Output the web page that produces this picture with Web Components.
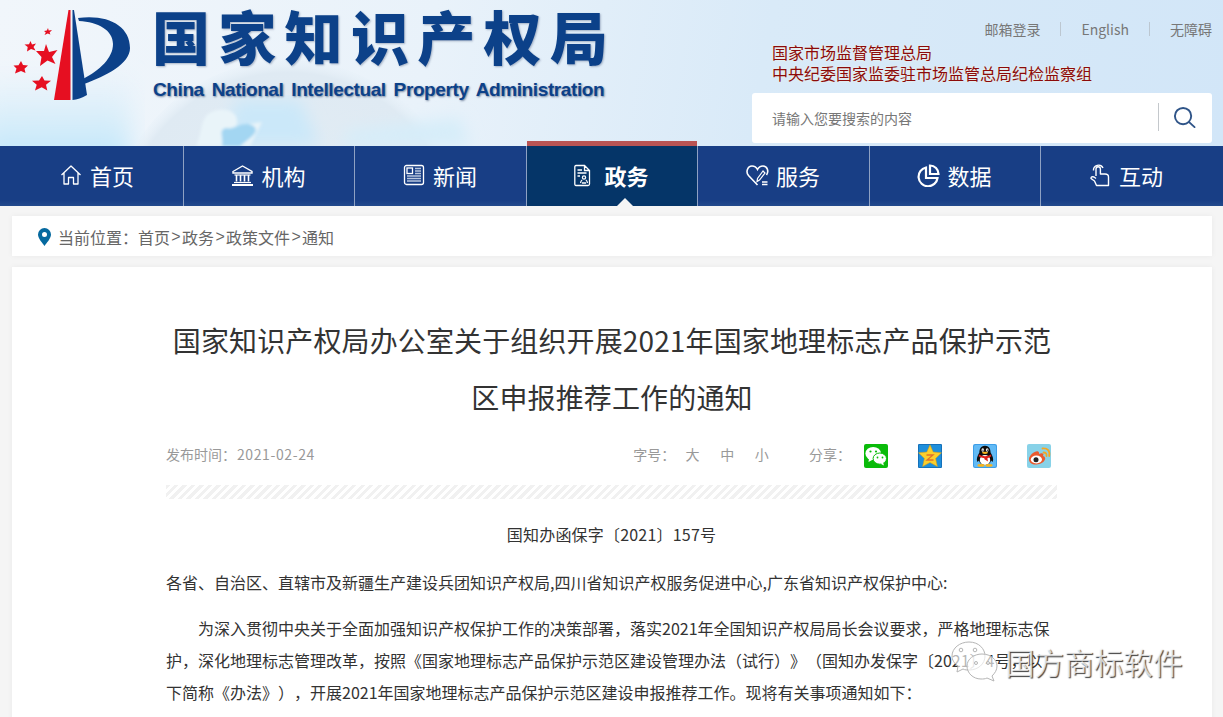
<!DOCTYPE html>
<html lang="zh">
<head>
<meta charset="utf-8">
<title>国家知识产权局</title>
<style>
  html, body { margin: 0; padding: 0; height: 717px; overflow: hidden; }
  body { background: #f5f5f5; font-family: "Noto Sans CJK SC", "Liberation Sans", sans-serif; color: #333; }
  site-nav { margin-bottom: 10px; }
  bread-crumb { margin-bottom: 11px; }
</style>
</head>
<body>
<site-header></site-header>
<site-nav>
  <nav-item icon="home">首页</nav-item>
  <nav-item icon="bank">机构</nav-item>
  <nav-item icon="news">新闻</nav-item>
  <nav-item icon="doc" active>政务</nav-item>
  <nav-item icon="heart">服务</nav-item>
  <nav-item icon="pie">数据</nav-item>
  <nav-item icon="hand">互动</nav-item>
</site-nav>
<bread-crumb>
  <span>当前位置：</span><a>首页</a><i>&gt;</i><a>政务</a><i>&gt;</i><a>政策文件</a><i>&gt;</i><a>通知</a>
</bread-crumb>
<article-card>
  <span slot="title">国家知识产权局办公室关于组织开展2021年国家地理标志产品保护示范区申报推荐工作的通知</span>
  <article-meta slot="meta" date="2021-02-24"></article-meta>
  <p class="center">国知办函保字〔2021〕157号</p>
  <p class="addr">各省、自治区、直辖市及新疆生产建设兵团知识产权局,四川省知识产权服务促进中心,广东省知识产权保护中心:</p>
  <p class="indent">为深入贯彻中央关于全面加强知识产权保护工作的决策部署，落实2021年全国知识产权局局长会议要求，严格地理标志保护，深化地理标志管理改革，按照《国家地理标志产品保护示范区建设管理办法（试行）》（国知办发保字〔2021〕4号，以下简称《办法》），开展2021年国家地理标志产品保护示范区建设申报推荐工作。现将有关事项通知如下：</p>
</article-card>
<water-mark>国方商标软件</water-mark>

<script>
// cabecera con fondo, logo, enlaces y buscador
class SiteHeader extends HTMLElement {
  constructor() {
    super();
    this.attachShadow({ mode: "open" });
  }
  connectedCallback() {
    this.shadowRoot.innerHTML = `
      <style>
        :host { display: block; position: relative; height: 146px; overflow: hidden;
          background: linear-gradient(100deg, #f1f6fb 0%, #e9f2fa 35%, #d9eaf8 62%, #d2e6f8 100%); }
        .bg { position: absolute; left: 0; top: 0; width: 1223px; height: 146px; }
        .wrap { position: relative; width: 1200px; height: 146px; margin-left: 12px;
          display: flex; justify-content: space-between; }
        .brand { display: flex; }
        .logo { width: 140px; height: 110px; margin-left: -12px; flex: none; }
        .names { margin-left: 12px; }
        .cn { font: 900 58px/58px "Noto Sans CJK SC", sans-serif; letter-spacing: 8.3px; color: #0c4189;
          margin-top: 6px; text-shadow: 1px 1px 2px rgba(40,60,100,.35); white-space: nowrap; }
        .en { font: bold 19px/24px "Liberation Sans", sans-serif; color: #0c4189; margin-top: 14px; margin-left: 1px;
          word-spacing: 3px; letter-spacing: -.4px; text-shadow: 1px 1px 2px rgba(30,50,90,.55); white-space: nowrap; }
        .side { width: 460px; display: flex; flex-direction: column; }
      </style>
      <svg class="bg" viewBox="0 0 1223 146">
        <defs>
          <radialGradient id="gl" cx=".5" cy=".5" r=".5">
            <stop offset="0" stop-color="#e4eef5"/>
            <stop offset=".93" stop-color="#dfeaf3"/>
            <stop offset="1" stop-color="#e6f0f8" stop-opacity=".3"/>
          </radialGradient>
          <linearGradient id="lf" x1="0" y1="0" x2="0" y2="1">
            <stop offset="0" stop-color="#c8e9fa" stop-opacity="0"/>
            <stop offset="1" stop-color="#b9e4fa"/>
          </linearGradient>
          <filter id="bl"><feGaussianBlur stdDeviation="1.5"/></filter>
          <filter id="bl1"><feGaussianBlur stdDeviation="8"/></filter>
          <filter id="bl2"><feGaussianBlur stdDeviation="12"/></filter>
        </defs>
        <rect x="-20" y="70" width="150" height="100" fill="url(#lf)" filter="url(#bl2)"/>
        <circle cx="288" cy="240" r="180" fill="url(#gl)"/>
        <g filter="url(#bl1)">
          <path d="M235 100 H300 L320 146 H225Z" fill="#cbe8f9"/>
          <path d="M350 130 L460 118 L470 146 H340Z" fill="#d6edf9"/>
        </g>
        <g filter="url(#bl)">
          <path d="M196 146 C205 128 198 114 218 110 C232 108 240 116 236 126 L262 122 L250 146Z" fill="#e9f4f9"/>
          <path d="M222 146 C224 136 218 130 226 128 C234 130 236 124 248 124 C258 126 258 132 250 138 L240 146Z" fill="#a3d6f2"/>
        </g>
      </svg>
      <div class="wrap">
        <div class="brand">
          <svg class="logo" viewBox="0 0 140 110">
            <g fill="#e60f21">
              <path d="M68.5 10 L70.5 10 L70.5 100 L54 100Z"/>
              <path d="M46 44 L49 52 L57.5 50 L52 57 L55.5 64 L47.5 60.5 L40 66 L41.5 57 L36 51 L44 51Z"/>
              <path d="M30.5 41 L32 44.5 L36 43.5 L33.5 47 L35.5 50.5 L31 49 L27 51.5 L27.7 47 L24.5 44.5 L29 44.3Z"/>
              <path d="M48 28 L48.7 30.5 L52 30 L49.6 32.4 L50.4 34.5 L47.7 33.4 L44.5 35 L45.8 32.4 L44 31 L46.8 30.6Z"/>
              <path d="M21 61 L23 65 L28 65.5 L24.5 68.7 L25.5 73 L21 71 L15 73.5 L16.5 68.5 L13.5 65.5 L18.5 65.3Z"/>
              <path d="M42 76 L44.5 80.5 L51 80.8 L46 84.7 L47.3 90.5 L41.7 87.3 L35 90.5 L36.7 84.7 L32 80.8 L39 80.5Z"/>
            </g>
            <g fill="#0c4189">
              <path d="M72.5 10 L74 10 L87 95 C82 98 77 99.5 72.5 100Z"/>
              <path d="M78 18 C108 14 130 26 130 48 C130 64 106 76 84 84 L83 79 C100 70 113 58 113 44 C113 30 98 22 79 21Z"/>
            </g>
          </svg>
          <div class="names">
            <div class="cn">国家知识产权局</div>
            <div class="en">China National Intellectual Property Administration</div>
          </div>
        </div>
        <div class="side">
          <top-links></top-links>
          <org-names></org-names>
          <search-box></search-box>
        </div>
      </div>`;
  }
}
window.customElements.define("site-header", SiteHeader);

class TopLinks extends HTMLElement {
  constructor() {
    super();
    this.attachShadow({ mode: "open" });
  }
  connectedCallback() {
    this.shadowRoot.innerHTML = `
      <style>
        :host { display: flex; justify-content: flex-end; align-items: center; height: 20px; margin-top: 19px;
          font: 14px/20px "Noto Sans CJK SC", sans-serif; color: #777; }
        a + a { margin-left: 20px; padding-left: 20px; border-left: 1px solid #bcc7d1; line-height: 14px; }
      </style>
      <a>邮箱登录</a><a>English</a><a>无障碍</a>`;
  }
}
window.customElements.define("top-links", TopLinks);

class OrgNames extends HTMLElement {
  constructor() {
    super();
    this.attachShadow({ mode: "open" });
  }
  connectedCallback() {
    this.shadowRoot.innerHTML = `
      <style>
        :host { display: block; margin-top: 3px; padding-left: 20px;
          font: 16px/21px "Noto Sans CJK SC", sans-serif; color: #8b0a0a;
          text-shadow: 0 0 2px #fff3d8; }
      </style>
      <div>国家市场监督管理总局</div>
      <div>中央纪委国家监委驻市场监管总局纪检监察组</div>`;
  }
}
window.customElements.define("org-names", OrgNames);

class SearchBox extends HTMLElement {
  constructor() {
    super();
    this.attachShadow({ mode: "open" });
  }
  connectedCallback() {
    this.shadowRoot.innerHTML = `
      <style>
        :host { display: flex; align-items: center; height: 50px; margin-top: 9px; background: #fff;
          border-radius: 3px; box-sizing: border-box; padding-left: 20px;
          font: 14px "Noto Sans CJK SC", sans-serif; color: #777; }
        span { flex: 1; }
        .btn { width: 53px; height: 28px; margin-top: -2px; border-left: 1px solid #c4c8cc;
          display: flex; align-items: center; justify-content: center; }
        svg { width: 23px; height: 23px; margin-left: -2px; }
      </style>
      <span>请输入您要搜索的内容</span>
      <div class="btn">
        <svg viewBox="0 0 24 24" fill="none" stroke="#2f5488" stroke-width="2">
          <circle cx="10.5" cy="10.5" r="8.5"/><path d="M16.8 16.8 L22.5 22" stroke-linecap="round"/>
        </svg>
      </div>`;
  }
}
window.customElements.define("search-box", SearchBox);

// barra de navegacion: solo reparte los items
class SiteNav extends HTMLElement {
  constructor() {
    super();
    this.attachShadow({ mode: "open" });
  }
  connectedCallback() {
    this.shadowRoot.innerHTML = `
      <style>
        :host { display: block; height: 60px; background: linear-gradient(#183e85 90%, #234a8c); }
        nav { width: 1200px; height: 60px; margin-left: 12px; display: grid;
          grid-template-columns: 171px 171px 172px 171px 172px 171px 172px; }
      </style>
      <nav><slot></slot></nav>`;
  }
}
window.customElements.define("site-nav", SiteNav);

const NAV_ICONS = {
  home: `<path d="M1.5 11 L11 2 L20.5 11 M4 9 V20 H8.5 V13.5 H13.5 V20 H18 V9" stroke-linejoin="round"/>`,
  bank: `<path d="M2 7.5 L11.5 2 L21 7.5 V9 H2Z" stroke-width="1.4"/><path d="M3.5 11 H19.5" stroke-width="1.2"/><path d="M5.5 11 V17.5 M9.5 11 V17.5 M13.5 11 V17.5 M17.5 11 V17.5" stroke-width="1.6"/><path d="M3 18.5 H20" stroke-width="1.2"/><path d="M1 21 H22" stroke-width="2"/>`,
  news: `<rect x="1.5" y="1.5" width="19" height="19" rx="2"/><rect x="4" y="4" width="5.5" height="5.5"/><path d="M12 4.5 H18 M12 7 H18 M12 9.5 H18 M4 12 H18 M4 14.5 H18 M4 17 H18" stroke-width="1.4" stroke="#b8c6de"/>`,
  doc: `<path d="M2 1.5 H10.5 L15.5 6.5 V20 Q15.5 21.5 14 21.5 H2 Q.8 21.5 .8 20 V3 Q.8 1.5 2 1.5Z M10.5 1.5 V6.5 H15.5 M3.5 6 H8 M3.5 9 H12.5 M3.5 12 H6"/><circle cx="10" cy="13.5" r="1.6"/><path d="M6.5 19 Q7 16.5 8.2 16 M13.5 19 Q13 16.5 11.8 16 M8 19 H12"/>`,
  heart: `<path d="M11.5 21 L2.5 11.5 C-.5 8 1.5 2 6 2 C8.5 2 10.5 3.5 11.5 5.5 C12.5 3.5 14.5 2 17 2 C21.5 2 23 7.5 20.5 11" stroke-width="1.6"/><path d="M17 7 L11.5 14.5 L11 17.5 L13.5 16 L19 9Z" stroke-width="1.2"/><path d="M16 18 H21.5 M16 20.5 H21.5" stroke-width="1.4"/>`,
  pie: `<path d="M9 3.5 A9.5 9.5 0 1 0 20.5 14 H9Z" stroke-width="2.2"/><path d="M13 1.5 A8.5 8.5 0 0 1 21.5 10 H13Z" stroke-width="2.2"/>`,
  hand: `<path d="M7 12 V5 A2.2 2.2 0 0 1 11.4 5 V10 H16 Q19.5 10 19.5 13 V21.5 H7.5 L5.5 17 L2 14.5 Q2 12 5 13 L7 14.5 M4.5 6.5 A5 5 0 0 1 14 4" stroke-width="1.4" stroke-linejoin="round"/>`
};

class NavItem extends HTMLElement {
  constructor() {
    super();
    this.attachShadow({ mode: "open" });
  }
  connectedCallback() {
    const icon = NAV_ICONS[this.getAttribute("icon")];
    this.shadowRoot.innerHTML = `
      <style>
        :host { display: flex; position: relative; height: 60px; align-items: center; justify-content: center;
          gap: 7px; box-sizing: border-box; padding: 0 1px 2px 0; color: #fff; font: 22px/58px "Noto Sans CJK SC", sans-serif; }
        :host(:not(:first-child)) { border-left: 1px solid #8ea1c3; }
        :host([active]) { background: #053568; font-weight: 700; }
        :host([active])::before { content: ""; position: absolute; left: 0; right: 0; top: -5px; height: 5px; background: #b95454; }
        :host([active])::after { content: ""; position: absolute; left: calc(50% + 12.5px); bottom: 0; margin-left: -8px;
          border: 8px solid transparent; border-top: 0; border-bottom-color: #f5f5f5; }
        svg { width: 23px; height: 23px; flex: none; }
      </style>
      <svg viewBox="0 0 23 23" fill="none" stroke="#fff" stroke-width="1.3">${icon}</svg>
      <slot></slot>`;
  }
}
window.customElements.define("nav-item", NavItem);

class BreadCrumb extends HTMLElement {
  constructor() {
    super();
    this.attachShadow({ mode: "open" });
  }
  connectedCallback() {
    this.shadowRoot.innerHTML = `
      <style>
        :host { display: flex; align-items: center; width: 1200px; height: 40px; margin: 0 0 11px 12px; padding: 2px 0 0 26px;
          box-sizing: border-box; background: #fff; box-shadow: 0 0 6px rgba(0,0,0,.05);
          font: 16px "Noto Sans CJK SC", sans-serif; color: #666; }
        svg { width: 13px; height: 18px; margin-right: 7px; }
        ::slotted(i) { font-style: normal; padding: 0 1.33px; color: #666; font-family: "Liberation Sans", sans-serif; }
      </style>
      <svg viewBox="0 0 13 18"><path fill="#05699f" fill-rule="evenodd" d="M6.5 0 A6.5 6.5 0 0 1 13 6.5 C13 10.5 8.5 15 6.5 18 C4.5 15 0 10.5 0 6.5 A6.5 6.5 0 0 1 6.5 0Z M6.5 4 A2.5 2.5 0 1 0 6.5 9 A2.5 2.5 0 1 0 6.5 4Z"/></svg>
      <slot></slot>`;
  }
}
window.customElements.define("bread-crumb", BreadCrumb);

class ArticleCard extends HTMLElement {
  constructor() {
    super();
    this.attachShadow({ mode: "open" });
  }
  connectedCallback() {
    this.shadowRoot.innerHTML = `
      <style>
        :host { display: block; width: 1200px; height: 460px; margin-left: 12px; padding: 45px 155px 0 154px; box-sizing: border-box;
          background: #fff; box-shadow: 0 0 6px rgba(0,0,0,.05); overflow: hidden;
          font: 16px/32px "Noto Sans CJK SC", sans-serif; color: #333; text-spacing-trim: space-all; }
        h1 { margin: 0 -1px 0 0; font: 400 28px/57px "Noto Sans CJK SC", sans-serif; text-align: center; color: #333;
          letter-spacing: .13px; padding: 0 5px; }
        .hatch { height: 14px; margin: 16px 0 19px;
          background: repeating-linear-gradient(135deg, #f1f1f1 0 3px, #fff 3px 6px); }
        ::slotted(p) { margin: 0 0 14px; }
        ::slotted(p.center) { text-align: center; margin-bottom: 16px; letter-spacing: .2px; }
        ::slotted(p.indent) { text-indent: 32px; }
      </style>
      <h1><slot name="title"></slot></h1>
      <slot name="meta"></slot>
      <div class="hatch"></div>
      <slot></slot>`;
  }
}
window.customElements.define("article-card", ArticleCard);

class ArticleMeta extends HTMLElement {
  constructor() {
    super();
    this.attachShadow({ mode: "open" });
  }
  connectedCallback() {
    const date = this.getAttribute("date");
    this.shadowRoot.innerHTML = `
      <style>
        :host { display: flex; align-items: center; height: 30px; margin-top: 13px;
          font: 14px/30px "Noto Sans CJK SC", sans-serif; color: #999; }
        .date { flex: 1; }
        .date span { letter-spacing: .6px; margin-left: 1px; }
        .size { display: flex; }
        .size span { margin: 0 10.3px; }
        .size span:first-child { margin: 0; }
        .share { margin-left: 30px; margin-right: 13px; }
        share-icon { margin-top: 4px; }
        share-icon + share-icon { margin-left: 30.33px; }
        share-icon:last-child { margin-right: 6px; }
      </style>
      <div class="date">发布时间：<span>${date}</span></div>
      <div class="size"><span>字号：</span><span>大</span><span>中</span><span>小</span></div>
      <div class="share">分享：</div>
      <share-icon kind="wechat"></share-icon>
      <share-icon kind="qzone"></share-icon>
      <share-icon kind="qq"></share-icon>
      <share-icon kind="weibo"></share-icon>`;
  }
}
window.customElements.define("article-meta", ArticleMeta);

const SHARE_ICONS = {
  wechat: `<rect width="24" height="24" rx="2" fill="#0abb0a"/>
    <ellipse cx="9.2" cy="9.5" rx="7.8" ry="6.6" fill="#fff"/><path d="M5 14 L4.5 18 L9 15.5Z" fill="#fff"/>
    <ellipse cx="15.8" cy="14.6" rx="6.7" ry="5.6" fill="#fff" stroke="#0abb0a" stroke-width="1"/><path d="M19 18.5 L20 21.5 L16.5 19.8Z" fill="#fff"/>
    <circle cx="6.5" cy="7.5" r="1.1" fill="#0abb0a"/><circle cx="12" cy="7.5" r="1.1" fill="#0abb0a"/>
    <circle cx="13.5" cy="13.5" r=".9" fill="#0abb0a"/><circle cx="18.5" cy="13.5" r=".9" fill="#0abb0a"/>`,
  qzone: `<rect width="24" height="24" rx="1" fill="#1571ba"/><rect x="1" y="1" width="22" height="22" fill="#1f8fdb"/>
    <path d="M12 .8 L15.2 8 L23.5 8.8 L17.6 14.4 L19.4 22.6 L12 18.4 L4.6 22.6 L6.4 14.4 L.5 8.8 L8.8 8Z" fill="#fbcf2c" stroke="#d99b14" stroke-width=".5"/>
    <path d="M8.5 11 H15 L9 16 H15.5" fill="none" stroke="#e2702a" stroke-width="1.3"/>`,
  qq: `<rect width="24" height="24" rx="2" fill="#3d9ee8"/><rect x="1" y="1" width="22" height="22" rx="1.5" fill="#62baf5"/>
    <path d="M12 1.8 C16.8 1.8 17.6 6 17.6 8.6 C19.6 12 21 15.2 19.6 18 L18 16.6 C17.4 19.6 15 21 12 21 C9 21 6.6 19.6 6 16.6 L4.4 18 C3 15.2 4.4 12 6.4 8.6 C6.4 6 7.2 1.8 12 1.8Z" fill="#0d0d0d"/>
    <ellipse cx="12" cy="16" rx="5.2" ry="5" fill="#fff"/>
    <ellipse cx="9.8" cy="6" rx="1.3" ry="1.8" fill="#fff"/><ellipse cx="14.2" cy="6" rx="1.3" ry="1.8" fill="#fff"/>
    <circle cx="14.4" cy="6.2" r=".6" fill="#0d0d0d"/><circle cx="10" cy="6.2" r=".6" fill="#0d0d0d"/>
    <ellipse cx="12" cy="8.8" rx="3" ry="1.1" fill="#f8b51d"/>
    <path d="M5.8 10.6 Q12 13.8 18.2 10.6 L18.2 12.6 Q15 14.2 14.4 14.2 L15 17.6 L11.4 15.2 L11.4 14.2 Q8 14 5.8 12.6Z" fill="#e0201b"/>
    <ellipse cx="8" cy="21.4" rx="3.6" ry="1.3" fill="#f8b51d"/><ellipse cx="16" cy="21.4" rx="3.6" ry="1.3" fill="#f8b51d"/>`,
  weibo: `<rect width="24" height="24" rx="2" fill="#88d2e8"/>
    <path d="M16.5 8.5 Q20 8.5 19.5 12 M15.5 4.5 Q23.5 4 22.2 12" fill="none" stroke="#f5a623" stroke-width="1.8" stroke-linecap="round"/>
    <path d="M2 15.5 C2 11 8.5 6.5 11 7.5 C12.5 8 12 10 12 10 C15 8.5 17.5 9.5 16 12 C18 12.5 18.5 14 18 15.5 C16.5 19.5 11.5 20.5 8.5 20.5 C5 20.5 2 18.5 2 15.5Z" fill="#ea5a2e"/>
    <ellipse cx="9.4" cy="15.5" rx="5.6" ry="3.9" fill="#fff"/><circle cx="9" cy="15.7" r="2.5" fill="#222"/>`
};

class ShareIcon extends HTMLElement {
  constructor() {
    super();
    this.attachShadow({ mode: "open" });
  }
  connectedCallback() {
    this.shadowRoot.innerHTML = `
      <style>
        :host { display: block; width: 24px; height: 24px; flex: none; }
        svg { display: block; width: 24px; height: 24px; }
      </style>
      <svg viewBox="0 0 24 24">${SHARE_ICONS[this.getAttribute("kind")]}</svg>`;
  }
}
window.customElements.define("share-icon", ShareIcon);

// marca de agua encima del texto
class WaterMark extends HTMLElement {
  constructor() {
    super();
    this.attachShadow({ mode: "open" });
  }
  connectedCallback() {
    this.shadowRoot.innerHTML = `
      <style>
        :host { position: absolute; left: 950px; top: 640px; display: flex; align-items: center; gap: 5px;
          font: 29.6px/44px "Noto Sans CJK SC", sans-serif; color: rgba(255,255,255,.75);
          text-shadow: 1px 1px 1px rgba(0,0,0,.75); white-space: nowrap; }
        svg { width: 50px; height: 44px; }
      </style>
      <svg viewBox="0 0 50 44" fill="rgba(255,255,255,.65)" stroke="#b5b5b5" stroke-width="1">
        <path d="M19 2 C29 2 35 9 35 16 C35 24 28 30 19 30 C17 30 15 30 13 29 L7 32 L8 26 C4 23 2 20 2 16 C2 8 10 2 19 2Z"/>
        <path d="M32 14 C41 14 47 20 47 26 C47 30 45 33 42 36 L44 41 L37 38 C35 39 33 39 31 39 C23 39 17 33 17 26 C17 19 24 14 32 14Z"/>
        <circle cx="11" cy="10" r="1.8"/><circle cx="25" cy="10" r="1.8"/><circle cx="26" cy="23" r="1.5"/><circle cx="38" cy="23" r="1.5"/>
      </svg>
      <slot></slot>`;
  }
}
window.customElements.define("water-mark", WaterMark);
</script>
</body>
</html>
